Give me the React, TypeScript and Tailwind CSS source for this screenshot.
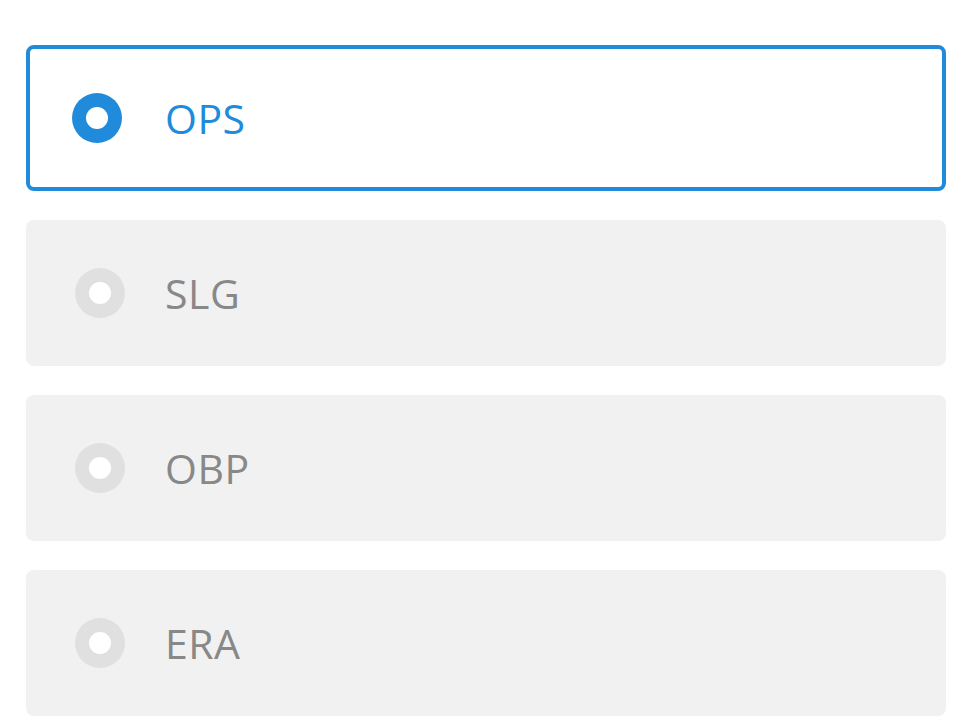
const options = ["OPS", "SLG", "OBP", "ERA"];

function Radio({ checked }: { checked: boolean }) {
  return (
    <span
      className={
        checked
          ? "flex h-[50px] w-[50px] shrink-0 items-center justify-center rounded-full bg-[#218bdb]"
          : "flex h-[50px] w-[50px] shrink-0 items-center justify-center rounded-full bg-[#e0e0e0]"
      }
    >
      <span className="h-[22px] w-[22px] rounded-full bg-white" />
    </span>
  );
}

export default function App() {
  const selected = "OPS";

  return (
    <div className="min-h-screen bg-white pt-[45px] font-['Open_Sans','Noto_Sans',sans-serif]">
      <div className="ml-[26px] flex w-[920px] flex-col gap-[29px]">
        {options.map((opt) => {
          const checked = opt === selected;
          return (
            <label
              key={opt}
              className={
                checked
                  ? "flex h-[146px] items-center rounded-[8px] border-4 border-[#218bdb] bg-white pl-[42px]"
                  : "flex h-[146px] items-center rounded-[8px] bg-[#f1f1f1] pl-[49px]"
              }
            >
              <Radio checked={checked} />
              <span
                className={
                  checked
                    ? "ml-[43px] text-[41px] leading-none tracking-[0.5px] text-[#218bdb]"
                    : "ml-[40px] text-[41px] leading-none tracking-[0.5px] text-[#888888]"
                }
              >
                {opt}
              </span>
            </label>
          );
        })}
      </div>
    </div>
  );
}
